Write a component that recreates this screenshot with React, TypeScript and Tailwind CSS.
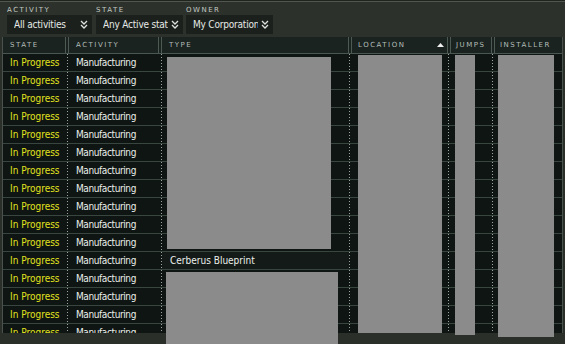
import React from "react";

function Chevs() {
  return (
    <svg width="8" height="9" viewBox="0 0 8 9" className="shrink-0">
      <path d="M1 1 L4 4 L7 1 M1 5 L4 8 L7 5" stroke="#dfe3df" strokeWidth="1.3" fill="none" />
    </svg>
  );
}

function Filter({ label, value, w, ml }: { label: string; value: string; w: string; ml: string }) {
  return (
    <div className={`flex flex-col ${w} ${ml}`}>
      <div className="h-[10px] leading-[10px] text-[7px] tracking-[1.5px] text-[#c3c9c3]">{label}</div>
      <div className="h-[19px] bg-[#1b201c] flex items-center pl-[7px] pr-[4px] gap-[3px]">
        <div className="flex-1 overflow-hidden whitespace-nowrap text-[10px] tracking-[-0.2px] text-[#e6e9e6] [font-stretch:condensed]">{value}</div>
        <Chevs />
      </div>
    </div>
  );
}

const headerCols = "grid-cols-[62px_4px_89px_4px_186px_4px_95px_4px_40px_4px_67px]";
const rowCols = "grid-cols-[64px_1px_93px_1px_187px_1px_98px_1px_43px_1px_69px]";

function HDiv() {
  return <div className="h-full border-l border-r border-[#4d5953]" />;
}

function Dots() {
  return <div className="h-full bg-[repeating-linear-gradient(to_bottom,#9ba49f_0_1px,transparent_1px_3px)]" />;
}

export default function App() {
  const rows = Array.from({ length: 16 }, (_, i) => i);
  return (
    <div className="w-[565px] h-[344px] relative overflow-hidden bg-[#2a2f2a] flex flex-col font-['DejaVu_Sans',sans-serif]">
      <div className="h-[1px] bg-[#20241f]" />
      <div className="h-[36px] bg-[#2c312c] border-t border-[#51574f] pt-[3px] flex">
        <Filter label="ACTIVITY" value="All activities" w="w-[85px]" ml="ml-[7px]" />
        <Filter label="STATE" value="Any Active state" w="w-[87px]" ml="ml-[4px]" />
        <Filter label="OWNER" value="My Corporation" w="w-[87px]" ml="ml-[3px]" />
      </div>
      <div className="ml-[2px] w-[561px] flex-1 flex flex-col border-l border-r border-[#4a524d] overflow-hidden">
        <div className={`h-[17px] shrink-0 grid ${headerCols} bg-[#1a2320] border-b border-[#4a5650] text-[7px] tracking-[1.5px] text-[#b4bdb8] items-center`}>
          <div className="pl-[7px]">STATE</div>
          <HDiv />
          <div className="pl-[7px]">ACTIVITY</div>
          <HDiv />
          <div className="pl-[7px]">TYPE</div>
          <HDiv />
          <div className="pl-[6px] pr-[3px] flex items-center justify-between">
            <span>LOCATION</span>
            <svg width="7" height="4" viewBox="0 0 7 4"><path d="M0 4 L3.5 0 L7 4 Z" fill="#f0f0f0" /></svg>
          </div>
          <HDiv />
          <div className="pl-[5px] overflow-hidden whitespace-nowrap">JUMPS</div>
          <HDiv />
          <div className="pl-[5px]">INSTALLER</div>
        </div>
        <div className="flex-1 overflow-hidden bg-[#0e1512]">
          {rows.map((i) => (
            <div key={i} className={`h-[18px] grid ${rowCols} border-b border-[#39453f] text-[10px] [font-stretch:condensed] items-center`}>
              <div className="pl-[7px] text-[#e3e320] whitespace-nowrap">In Progress</div>
              <Dots />
              <div className="pl-[8px] text-[#ecefec] whitespace-nowrap tracking-[-0.4px]">Manufacturing</div>
              <Dots />
              <div className={`h-full flex items-center pl-[8px] text-[#ecefec] whitespace-nowrap ${i === 11 ? "bg-[#141a17]" : ""}`}>
                {i === 11 ? "Cerberus Blueprint" : ""}
              </div>
              <Dots />
              <div />
              <Dots />
              <div />
              <Dots />
              <div />
            </div>
          ))}
        </div>
      </div>
      <div className="h-[11px] shrink-0 bg-[#2a2f2a]" />

      <div className="absolute left-[167px] top-[57px] w-[164px] h-[192px] bg-[#8b8b8b]" />
      <div className="absolute left-[166px] top-[272px] w-[172px] h-[72px] bg-[#8b8b8b]" />
      <div className="absolute left-[358px] top-[55px] w-[84px] h-[278px] bg-[#8b8b8b]" />
      <div className="absolute left-[455px] top-[55px] w-[20px] h-[280px] bg-[#8b8b8b]" />
      <div className="absolute left-[498px] top-[55px] w-[56px] h-[282px] bg-[#8b8b8b]" />
    </div>
  );
}
